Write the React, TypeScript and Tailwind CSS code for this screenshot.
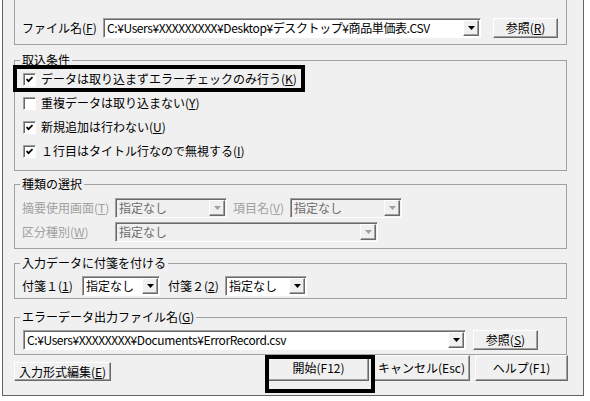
import React from "react";

const raised =
  "border border-t-white border-l-white border-r-[#696969] border-b-[#696969] shadow-[inset_-1px_-1px_#a0a0a0]";
const sunken =
  "border border-t-[#a0a0a0] border-l-[#a0a0a0] border-r-white border-b-white shadow-[inset_1px_1px_#696969]";

function Arrow({ disabled }: { disabled?: boolean }) {
  return (
    <svg width="7" height="4" viewBox="0 0 7 4">
      <polygon points="0,0 7,0 3.5,4" fill={disabled ? "#a0a0a0" : "#000"} />
    </svg>
  );
}

function Combo({
  w,
  text,
  disabled,
  tight,
}: {
  w: string;
  text: string;
  disabled?: boolean;
  tight?: boolean;
}) {
  return (
    <div
      className={`flex h-[20px] shrink-0 p-[1px] ${w} ${sunken} ${
        disabled ? "bg-[#f0f0f0] text-[#6d6d6d]" : "bg-white text-black"
      }`}
    >
      <span
        className={`flex-1 overflow-hidden whitespace-nowrap pl-[2px] leading-[16px] ${
          tight ? "tracking-[-0.4px]" : ""
        }`}
      >
        {text}
      </span>
      <span className={`flex w-[16px] items-center justify-center bg-[#f0f0f0] ${raised}`}>
        <Arrow disabled={disabled} />
      </span>
    </div>
  );
}

function Button({ w, h, children, className = "" }: { w: string; h: string; children: React.ReactNode; className?: string }) {
  return (
    <div className={`flex shrink-0 items-center justify-center bg-[#f0f0f0] ${w} ${h} ${raised} ${className}`}>
      {children}
    </div>
  );
}

function Check({ checked, children }: { checked?: boolean; children: React.ReactNode }) {
  return (
    <div className="flex h-[24px] items-center gap-[5px]">
      <span className={`flex h-[13px] w-[13px] items-center justify-center bg-white ${sunken}`}>
        {checked && (
          <svg width="7" height="7" viewBox="0 0 7 7">
            <polyline points="0.5,3 2.5,5.2 6.5,1" fill="none" stroke="#000" strokeWidth="1.8" />
          </svg>
        )}
      </span>
      <span>{children}</span>
    </div>
  );
}

function Group({
  title,
  className = "",
  children,
}: {
  title: React.ReactNode;
  className?: string;
  children: React.ReactNode;
}) {
  return (
    <fieldset className={`w-[553px] border border-[#a0a0a0] ${className}`}>
      <legend className="ml-[5px] px-[2px] leading-[14px]">{title}</legend>
      {children}
    </fieldset>
  );
}

export default function App() {
  return (
    <div className="h-[401px] w-[590px] bg-white text-[12px] text-black font-['Noto_Sans_CJK_JP','Noto_Sans',sans-serif]">
      <div className="relative ml-[2px] h-[396px] w-[582px] border-x border-b border-[#646464] bg-[#f0f0f0] pl-[11px]">
        {/* ファイル */}
        <div className="flex h-[45px] w-[553px] items-start border-x border-b border-[#a0a0a0] pt-[18px]">
          <span className="w-[88px] shrink-0 pl-[7px] leading-[20px]">
            ファイル名(<u>F</u>)
          </span>
          <Combo w="w-[378px]" text="C:¥Users¥XXXXXXXXX¥Desktop¥デスクトップ¥商品単価表.CSV" tight />
          <Button w="w-[65px]" h="h-[20px]" className="ml-[12px]">
            参照(<u>R</u>)
          </Button>
        </div>

        <Group title="取込条件" className="mt-[8px]">
          <div className="flex flex-col pb-[7px] pl-[8px]">
            <Check checked>
              データは取り込まずエラーチェックのみ行う(<u>K</u>)
            </Check>
            <Check>
              重複データは取り込まない(<u>Y</u>)
            </Check>
            <Check checked>
              新規追加は行わない(<u>U</u>)
            </Check>
            <Check checked>
              １行目はタイトル行なので無視する(<u>I</u>)
            </Check>
          </div>
        </Group>

        <Group title="種類の選択" className="mt-[6px]">
          <div className="flex flex-col gap-[4px] pb-[6px] pt-[7px] text-[#a0a0a0]">
            <div className="flex items-center">
              <span className="w-[100px] shrink-0 pl-[7px]">
                摘要使用画面(<u>T</u>)
              </span>
              <Combo w="w-[112px]" text="指定なし" disabled />
              <span className="ml-[6px] w-[57px] shrink-0">
                項目名(<u>V</u>)
              </span>
              <Combo w="w-[112px]" text="指定なし" disabled />
            </div>
            <div className="flex items-center">
              <span className="w-[100px] shrink-0 pl-[7px]">
                区分種別(<u>W</u>)
              </span>
              <Combo w="w-[263px]" text="指定なし" disabled />
            </div>
          </div>
        </Group>

        <Group title="入力データに付箋を付ける" className="mt-[7px]">
          <div className="flex items-center pb-[2px] pt-[6px]">
            <span className="w-[67px] shrink-0 pl-[7px]">
              付箋１(<u>1</u>)
            </span>
            <Combo w="w-[78px]" text="指定なし" />
            <span className="ml-[8px] w-[57px] shrink-0">
              付箋２(<u>2</u>)
            </span>
            <Combo w="w-[82px]" text="指定なし" />
          </div>
        </Group>

        <Group
          title={
            <>
              エラーデータ出力ファイル名(<u>G</u>)
            </>
          }
          className="mt-[11px]"
        >
          <div className="flex items-center pb-[4px] pl-[8px] pt-[6px]">
            <Combo w="w-[443px]" text="C:¥Users¥XXXXXXXX¥Documents¥ErrorRecord.csv" tight />
            <Button w="w-[65px]" h="h-[20px]" className="ml-[7px]">
              参照(<u>S</u>)
            </Button>
          </div>
        </Group>

        <div className="flex items-start">
          <Button w="w-[97px]" h="h-[19px]" className="mt-[7px]">
            入力形式編集(<u>E</u>)
          </Button>
          <Button w="w-[101px]" h="h-[26px]" className="ml-[157px]">
            開始(F12)
          </Button>
          <Button w="w-[97px]" h="h-[26px]" className="ml-[4px]">
            キャンセル(Esc)
          </Button>
          <Button w="w-[93px]" h="h-[26px]" className="ml-[5px]">
            ヘルプ(F1)
          </Button>
        </div>

        {/* 強調枠 */}
        <div className="absolute left-[10px] top-[65px] h-[27px] w-[292px] border-[4px] border-black" />
        <div className="absolute left-[262px] top-[355px] h-[38px] w-[110px] border-[4px] border-black" />
      </div>
    </div>
  );
}
